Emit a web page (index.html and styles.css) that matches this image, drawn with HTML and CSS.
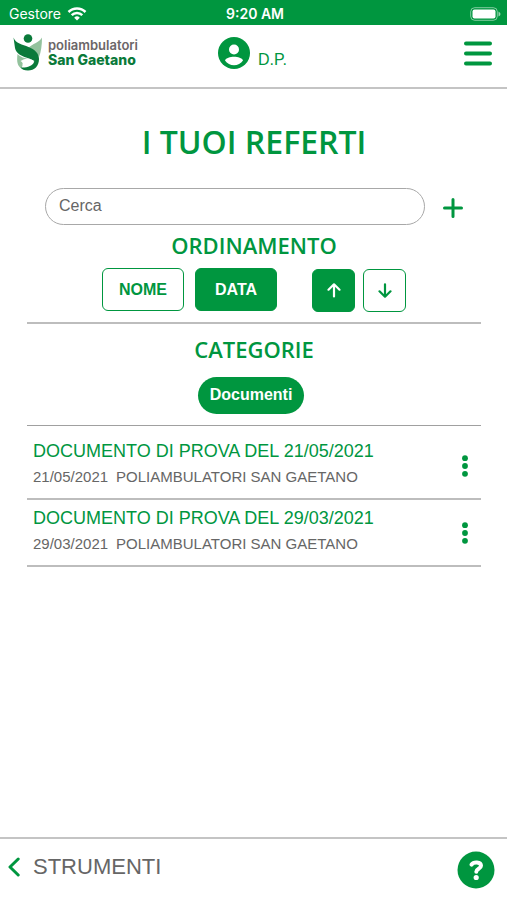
FILE: index.html
```html
<!DOCTYPE html>
<html lang="it">
<head>
<meta charset="utf-8">
<meta name="viewport" content="width=device-width, initial-scale=1">
<title>I tuoi referti</title>
<link rel="stylesheet" href="styles.css">
</head>
<body>
<div class="status">
  <div class="carrier"><span>Gestore</span>
    <svg width="20" height="14" viewBox="0 0 20 14" fill="none" stroke="#fff" stroke-width="2.5"><path d="M1.5 5a12 12 0 0 1 17 0M4.7 8.2a7.500 7.500 0 0 1 10.600 0"/><path d="M7.200 10.700a4 4 0 0 1 5.600 0L10 13.500z" fill="#fff" stroke="none"/></svg>
  </div>
  <span class="clock">9:20 AM</span>
  <svg class="battery" width="31" height="14" viewBox="0 0 31 14"><rect x=".7" y=".7" width="26.600" height="12.600" rx="4" fill="none" stroke="#fff" stroke-opacity=".5"/><rect x="2.500" y="2.500" width="23" height="9" rx="2" fill="#fff"/><path d="M28.500 4.500q2 1 2 2.500t-2 2.500z" fill="#fff" fill-opacity=".6"/></svg>
</div>
<header class="header">
  <a class="brand" href="#">
    <svg width="30" height="38" viewBox="0 0 30 38">
      <path d="M29 3.500C27 8 19 10 15.500 14c0 4 9 4 10.500 9 2-5 3-12 3-19.500z" fill="#93c29d"/>
      <path d="M4.500 20c-1 8 0 12 4 14.500 1-5 6-8 12-9-6-1-12-1-16-5.500z" fill="#93c29d"/>
      <path d="M.5 3.500c2 6 9 7 15 9.500 6 2.500 10.500 6 10.500 12C26 32 21.500 36.500 15 36.500c-4 0-6-1-7.500-3C14 34 20 31.500 21 28c-2-5-17-4-19-14z" fill="#0a7a3a"/>
      <path d="M7.500 27q7-5 14 0-5 4.500-12.500 4.500 2-2.500-1.500-4.500z" fill="#fff"/>
      <circle cx="15" cy="4.500" r="4.300" fill="#0a7a3a"/>
    </svg>
    <span class="brand-text"><span class="brand-top">poliambulatori</span><span class="brand-name">San Gaetano</span></span>
  </a>
  <a class="user" href="#">
    <svg width="32" height="32" viewBox="0 0 32 32"><circle cx="16" cy="16" r="16" fill="#00963f"/><circle cx="16" cy="12.500" r="5" fill="#fff"/><path d="M7 23.500C9 18.500 23 18.500 25 23.500 21 29.800 11 29.800 7 23.500z" fill="#fff"/></svg>
    <span>D.P.</span>
  </a>
  <button class="icon-button menu" aria-label="Menu">
    <svg width="28" height="25" viewBox="0 0 28 25" stroke="#00963f" stroke-width="4" stroke-linecap="round"><path d="M2 2.500h24M2 12.500h24M2 22.500h24"/></svg>
  </button>
</header>
<main class="main">
  <h1>I TUOI REFERTI</h1>
  <form class="search">
    <input type="text" placeholder="Cerca" aria-label="Cerca">
    <button class="icon-button" type="button" aria-label="Aggiungi">
      <svg width="20" height="20" viewBox="0 0 20 20" stroke="#00963f" stroke-width="3" stroke-linecap="round"><path d="M10 1.500v17M1.500 10h17"/></svg>
    </button>
  </form>
  <section class="sorting">
    <h2>ORDINAMENTO</h2>
    <div class="sort-row">
      <div class="group">
        <button class="box">NOME</button>
        <button class="box active">DATA</button>
      </div>
      <div class="group arrows">
        <button class="box square active" aria-label="Crescente"><svg width="14" height="16" viewBox="0 0 14 16" fill="none" stroke="currentColor" stroke-width="2.200" stroke-linecap="round" stroke-linejoin="round"><path d="M7 13.500V1.500M1.500 6.700 7 1.300l5.500 5.400"/></svg></button>
        <button class="box square" aria-label="Decrescente"><svg width="14" height="16" viewBox="0 0 14 16" fill="none" stroke="currentColor" stroke-width="2.200" stroke-linecap="round" stroke-linejoin="round"><path d="M7 1.300V13.500M1.500 8.300 7 13.700l5.500-5.400"/></svg></button>
      </div>
    </div>
  </section>
  <section class="categories">
    <h2>CATEGORIE</h2>
    <button class="pill">Documenti</button>
  </section>
  <ul class="documents">
    <li>
      <div class="info"><a href="#">DOCUMENTO DI PROVA DEL 21/05/2021</a><p><span>21/05/2021</span><span>POLIAMBULATORI SAN GAETANO</span></p></div>
      <button class="icon-button" aria-label="Opzioni"><svg width="8" height="22" viewBox="0 0 8 22" fill="#00963f"><circle cx="4" cy="3.200" r="2.900"/><circle cx="4" cy="11" r="2.900"/><circle cx="4" cy="18.800" r="2.900"/></svg></button>
    </li>
    <li>
      <div class="info"><a href="#">DOCUMENTO DI PROVA DEL 29/03/2021</a><p><span>29/03/2021</span><span>POLIAMBULATORI SAN GAETANO</span></p></div>
      <button class="icon-button" aria-label="Opzioni"><svg width="8" height="22" viewBox="0 0 8 22" fill="#00963f"><circle cx="4" cy="3.200" r="2.900"/><circle cx="4" cy="11" r="2.900"/><circle cx="4" cy="18.800" r="2.900"/></svg></button>
    </li>
  </ul>
</main>
<footer class="footer">
  <a class="back" href="#">
    <svg width="12" height="20" viewBox="0 0 12 20" fill="none" stroke="#00963f" stroke-width="3" stroke-linecap="round" stroke-linejoin="round"><path d="M10.200 2 2 10l8.200 8"/></svg>
    <span>STRUMENTI</span>
  </a>
  <button class="icon-button" aria-label="Aiuto">
    <svg width="38" height="38" viewBox="0 0 38 38"><circle cx="19" cy="19" r="18.500" fill="#00963f"/><path d="M14.500 13.600c2-3 9.500-3 9.500 1.200 0 3.200-4.700 2.800-4.700 6" fill="none" stroke="#fff" stroke-width="4" stroke-linecap="round"/><circle cx="19.200" cy="26.500" r="2.600" fill="#fff"/></svg>
  </button>
</footer>
</body>
</html>
```

FILE: styles.css
```css
:root {
  --green: #00963f;
  --gray: #666;
  --line: #bdbdbd;
}

* {
  box-sizing: border-box;
}

body {
  margin: 0;
  min-height: 100vh;
  display: flex;
  flex-direction: column;
  background: #fff;
  color: var(--gray);
  font-family: "Liberation Sans", Arial, sans-serif;
}

a {
  color: var(--green);
  text-decoration: none;
}

button {
  font: inherit;
  cursor: pointer;
}

svg {
  display: block;
  flex: none;
}

h1,
h2 {
  margin: 0;
  color: var(--green);
  font-family: "Open Sans", sans-serif;
  font-weight: 600;
  text-align: center;
}

.status {
  display: grid;
  grid-template-columns: 1fr auto 1fr;
  align-items: center;
  height: 25px;
  padding: 2px 6px 0 9px;
  background: var(--green);
  color: #fff;
  font-family: Inter, sans-serif;
  font-size: 14px;
}

.carrier {
  display: flex;
  align-items: center;
  gap: 6px;
}

.clock {
  font-weight: 600;
}

.battery {
  justify-self: end;
}

.header {
  display: grid;
  grid-template-columns: 1fr auto 1fr;
  align-items: center;
  height: 64px;
  padding: 0 15px 6px 13px;
  border-bottom: 2px solid #c4c4c4;
}

.brand {
  display: flex;
  align-items: center;
  gap: 5px;
}

.brand-text {
  display: flex;
  flex-direction: column;
  font-family: Inter, sans-serif;
  white-space: nowrap;
}

.brand-top {
  color: #6b6668;
  font-size: 13px;
  font-weight: 600;
  line-height: 13px;
}

.brand-name {
  color: #0a7a3a;
  font-size: 14px;
  font-weight: 800;
  line-height: 15px;
}

.user {
  display: flex;
  align-items: center;
  gap: 8px;
  font-size: 16px;
}

.user span {
  padding-top: 14px;
}

.icon-button {
  padding: 0;
  border: 0;
  background: none;
}

.menu {
  justify-self: end;
}

.main {
  flex: 1;
  padding: 31px 26px 0 27px;
}

h1 {
  font-size: 32px;
  line-height: 44px;
}

h2 {
  font-size: 22px;
  line-height: 30px;
}

.search {
  display: flex;
  align-items: center;
  gap: 18px;
  margin-top: 24px;
  padding: 0 18px;
}

.search input {
  flex: 1;
  min-width: 0;
  height: 37px;
  padding: 0 13px 2px;
  border: 1px solid #a8a8a8;
  border-radius: 19px;
  background: #fff;
  color: var(--gray);
  font: inherit;
  font-size: 16px;
}

.search input::placeholder {
  color: var(--gray);
}

.search .icon-button {
  padding-top: 3px;
}

.sorting {
  padding: 5px 0 10px;
  border-bottom: 2px solid var(--line);
}

.sort-row {
  display: flex;
  justify-content: center;
  gap: 35px;
  margin-top: 8px;
}

.group {
  display: flex;
  gap: 11px;
}

.arrows {
  gap: 8px;
  padding-top: 1px;
}

.box {
  display: grid;
  place-items: center;
  width: 82px;
  height: 43px;
  padding: 0;
  border: 1px solid var(--green);
  border-radius: 6px;
  background: #fff;
  color: var(--green);
  font-size: 16px;
  font-weight: 700;
}

.square {
  width: 43px;
}

.active {
  background: var(--green);
  color: #fff;
}

.categories {
  display: flex;
  flex-direction: column;
  align-items: center;
  gap: 13px;
  padding: 10px 0 11px;
  border-bottom: 1px solid #a0a0a0;
}

.pill {
  height: 37px;
  margin-right: 6px;
  padding: 0 12px 2px;
  border: 0;
  border-radius: 19px;
  background: var(--green);
  color: #fff;
  font-size: 16px;
  font-weight: 700;
}

.documents {
  margin: 0;
  padding: 7px 0 0;
  list-style: none;
}

.documents li {
  display: flex;
  justify-content: space-between;
  align-items: center;
  height: 67px;
  padding: 0 12px 0 6px;
  border-bottom: 2px solid var(--line);
}

.info a {
  font-size: 18px;
  line-height: 26px;
}

.info p {
  display: flex;
  gap: 8px;
  margin: 0;
  padding-bottom: 4px;
  font-size: 15px;
  line-height: 26px;
}

.footer {
  display: flex;
  justify-content: space-between;
  align-items: center;
  height: 63px;
  padding: 0 12px 0 8px;
  border-top: 2px solid #c4c4c4;
}

.back {
  display: flex;
  align-items: center;
  gap: 13px;
  padding-bottom: 6px;
  color: var(--gray);
  font-size: 22px;
}
```
